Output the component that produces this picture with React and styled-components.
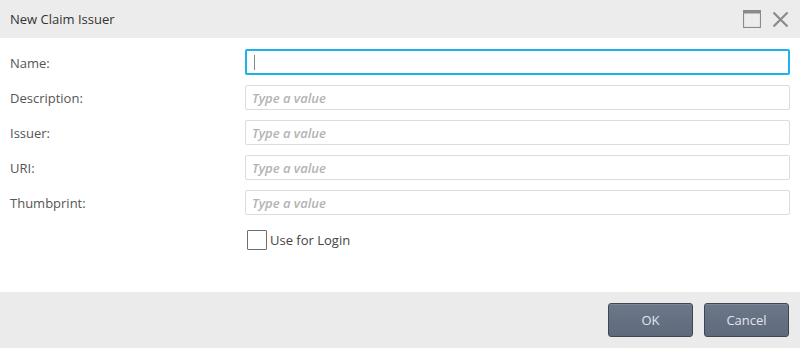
import React from "react";
import styled, { createGlobalStyle } from "styled-components";

const Global = createGlobalStyle`
  html, body { margin: 0; padding: 0; background: #fff; }
  body { font-family: "Open Sans", "Liberation Sans", sans-serif; }
  * { box-sizing: border-box; }
`;

const Dialog = styled.div`
  width: 800px;
  height: 348px;
  display: flex;
  flex-direction: column;
  background: #fff;
`;

const Header = styled.div`
  height: 38px;
  flex: none;
  background: #ececec;
  display: flex;
  align-items: center;
  justify-content: space-between;
  padding: 0 11px 0 10px;
`;

const Title = styled.div`
  font-size: 13px;
  color: #333;
  margin-top: -1px;
`;

const Tools = styled.div`
  display: flex;
  align-items: center;
  gap: 10px;
`;

const IconBtn = styled.span`
  display: flex;
  width: 18px;
  height: 18px;
  align-items: center;
  justify-content: center;
`;

const Body = styled.div`
  flex: 1;
  padding: 12px 10px 0 10px;
  display: flex;
  flex-direction: column;
  gap: 10px;
`;

const Row = styled.div`
  display: grid;
  grid-template-columns: 235px 1fr;
  align-items: center;
  height: 25px;
`;

const Label = styled.label`
  font-size: 13px;
  color: #555;
`;

const Input = styled.input`
  height: 25px;
  width: 100%;
  border: 1px solid #dcdcdc;
  border-radius: 2px;
  padding: 0 6px;
  font-family: "Open Sans", "Liberation Sans", sans-serif;
  font-size: 13px;
  color: #333;
  outline: none;
  &::placeholder {
    color: #b3b3b3;
    font-style: italic;
    font-weight: 600;
  }
`;

const Caret = styled.span`
  display: block;
  width: 1px;
  height: 15px;
  background: #888;
  margin-left: 7px;
`;

const FocusBox = styled.div`
  height: 26px;
  margin-top: -1px;
  border: 2px solid #1fb1ec;
  border-radius: 2px;
  display: flex;
  align-items: center;
`;

const CheckRow = styled.div`
  display: flex;
  align-items: center;
  gap: 3px;
  padding-left: 237px;
  margin-top: 5px;
`;

const Box = styled.span`
  width: 20px;
  height: 20px;
  border: 1px solid #6e6e6e;
  border-radius: 1px;
  background: #fff;
`;

const CheckText = styled.span`
  font-size: 13px;
  color: #444;
`;

const Footer = styled.div`
  height: 56px;
  flex: none;
  background: #ebebeb;
  display: flex;
  justify-content: flex-end;
  align-items: center;
  gap: 11px;
  padding: 0 11px 0 0;
`;

const Button = styled.button`
  width: 85px;
  height: 34px;
  border: 1px solid #3f4652;
  border-radius: 3px;
  background: linear-gradient(#6c7789, #5e697b);
  box-shadow: inset 0 1px 0 rgba(255, 255, 255, 0.12);
  color: #e2e6ec;
  font-family: "Open Sans", "Liberation Sans", sans-serif;
  font-size: 13px;
  padding: 0;
`;

const fields = ["Description:", "Issuer:", "URI:", "Thumbprint:"];

export default function App() {
  return (
    <>
      <Global />
      <Dialog>
        <Header>
          <Title>New Claim Issuer</Title>
          <Tools>
            <IconBtn>
              <svg width="18" height="18" viewBox="0 0 18 18">
                <rect x="0.5" y="0.5" width="17" height="17" fill="none" stroke="#8a8a8a" strokeWidth="1.2" />
                <rect x="0" y="0" width="18" height="3.5" fill="#8a8a8a" />
              </svg>
            </IconBtn>
            <IconBtn>
              <svg width="17" height="17" viewBox="0 0 17 17">
                <path d="M1.5 1.5 L15.5 15.5 M15.5 1.5 L1.5 15.5" stroke="#8a8a8a" strokeWidth="2.2" strokeLinecap="butt" />
              </svg>
            </IconBtn>
          </Tools>
        </Header>
        <Body>
          <Row>
            <Label>Name:</Label>
            <FocusBox>
              <Caret />
            </FocusBox>
          </Row>
          {fields.map((f) => (
            <Row key={f}>
              <Label>{f}</Label>
              <Input placeholder="Type a value" readOnly />
            </Row>
          ))}
          <CheckRow>
            <Box />
            <CheckText>Use for Login</CheckText>
          </CheckRow>
        </Body>
        <Footer>
          <Button>OK</Button>
          <Button>Cancel</Button>
        </Footer>
      </Dialog>
    </>
  );
}
